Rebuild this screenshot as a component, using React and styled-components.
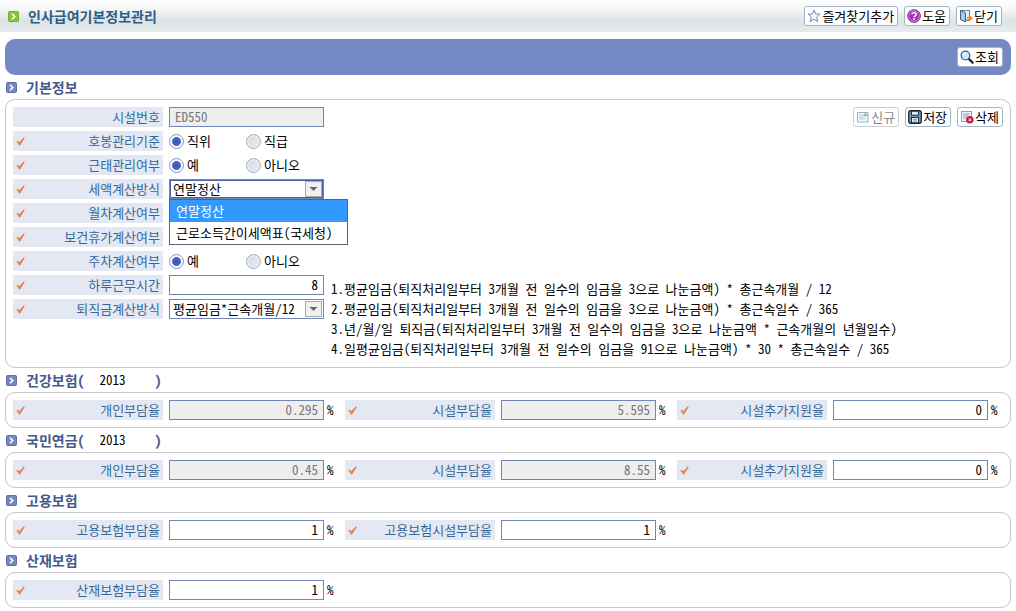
import React, { useState } from 'react';
import styled, { createGlobalStyle } from 'styled-components';

const GlobalStyle = createGlobalStyle`
  * {
    box-sizing: border-box;
  }
  body {
    margin: 0;
    background: #ffffff;
    color: #000000;
  }
  body, button, input, select {
    font-family: "Noto Sans Mono CJK KR", "Noto Sans CJK KR", "Liberation Sans", sans-serif;
    font-size: 13px;
    line-height: 20px;
  }
`;

const Header = styled.header`
  display: flex;
  align-items: center;
  justify-content: space-between;
  height: 32px;
  padding: 0 14px 0 8px;
  background: linear-gradient(#ffffff 0%, #f4f6f6 30%, #dde3e5 65%, #e6ebec 100%);
`;

const PageTitle = styled.h1`
  display: flex;
  align-items: center;
  gap: 9px;
  margin: 0;
  font-size: 14px;
  font-weight: 700;
  line-height: 20px;
  color: #2c5f88;
`;

const ButtonGroup = styled.div`
  display: flex;
  gap: 6px;
`;

const ToolButton = styled.button`
  display: flex;
  align-items: center;
  gap: 1px;
  height: 20px;
  padding: 0 3px 0 2px;
  border: 1px solid #a3b5c4;
  border-radius: 3px;
  background: #ffffff;
  color: #000000;
  line-height: 18px;
  white-space: nowrap;
  cursor: pointer;
  &:disabled {
    border-color: #c9ced3;
    color: #8c8c8c;
    cursor: default;
  }
  > svg {
    flex: none;
  }
`;

const SearchBar = styled.div`
  display: flex;
  align-items: center;
  justify-content: flex-end;
  height: 36px;
  margin: 7px 5px 0;
  padding: 0 8px;
  border-radius: 10px;
  background: #7489c6;
`;

const SectionTitle = styled.h2`
  display: flex;
  align-items: center;
  height: 24px;
  margin: 0;
  padding: 0 6px;
  font-size: 14px;
  font-weight: 700;
  color: #46598c;
  > svg {
    margin-right: 9px;
  }
`;

const YearInput = styled.input`
  width: 70px;
  height: 20px;
  padding: 0 0 0 15px;
  border: none;
  background: none;
  color: #000000;
`;

const Panel = styled.section`
  display: flex;
  margin: 0 5px;
  padding: ${(props) => (props.$tall ? '7px 7px 8px' : '7px')};
  border: 1px solid #c6c6c9;
  border-radius: 10px;
`;

const FieldList = styled.div`
  display: flex;
  flex-direction: column;
  gap: 4px;
`;

const RateList = styled.div`
  display: flex;
  gap: 12px;
`;

const Field = styled.div`
  display: flex;
  gap: 6px;
  height: 20px;
`;

const FieldLabel = styled.label`
  display: flex;
  align-items: center;
  justify-content: space-between;
  width: 150px;
  padding: 0 3px;
  background: #e4e8f3;
  color: #36699a;
  white-space: nowrap;
`;

const LabelText = styled.span`
  margin-left: auto;
`;

const TextInput = styled.input`
  width: 155px;
  height: 20px;
  padding: 0 5px 1px;
  border: 1px solid #7385b5;
  border-radius: 0;
  background: #ffffff;
  color: #000000;
  line-height: 17px;
  text-align: ${(props) => props.$align || 'right'};
  &:read-only {
    background: #eeeeee;
    color: #777777;
  }
`;

const RateValue = styled.div`
  display: flex;
  gap: 3px;
`;

const Unit = styled.span`
  width: 6px;
`;

const RadioGroup = styled.div`
  display: flex;
`;

const RadioLabel = styled.label`
  display: flex;
  align-items: center;
  gap: 3px;
  width: 77px;
  white-space: nowrap;
`;

const Radio = styled.input`
  appearance: none;
  flex: none;
  width: 15px;
  height: 15px;
  margin: 0;
  border: 1px solid #a9adb3;
  border-radius: 50%;
  background: linear-gradient(135deg, #d3dae2, #e9eff4);
  box-shadow: inset 0 0 0 1px #f4f6f8;
  &:checked {
    border-color: #8795b9;
    background: radial-gradient(circle, #3454b4 0, #4766c0 4px, #ffffff 5px);
  }
`;

const SelectBox = styled.div`
  position: relative;
  width: 155px;
  height: 20px;
`;

const Select = styled.select`
  appearance: none;
  width: 100%;
  height: 20px;
  padding: 0 20px 0 3px;
  border: 1px solid #7385b5;
  border-radius: 0;
  outline: ${(props) => (props.$open ? '1px solid #4b5fa5' : 'none')};
  outline-offset: -2px;
  background: #ffffff;
  color: #000000;
  line-height: 18px;
`;

const SelectArrow = styled.svg`
  position: absolute;
  top: 2px;
  right: 2px;
  pointer-events: none;
`;

const OptionList = styled.ul`
  position: absolute;
  z-index: 1;
  top: 20px;
  left: 0;
  width: 179px;
  margin: 0;
  padding: 0;
  border: 1px solid #5a6270;
  background: #ffffff;
  list-style: none;
`;

const Option = styled.li`
  height: 22px;
  padding: 0 6px;
  line-height: 22px;
  white-space: nowrap;
  background: ${(props) => (props.$selected ? '#3399ff' : '#ffffff')};
  color: ${(props) => (props.$selected ? '#ffffff' : '#000000')};
`;

const Aside = styled.div`
  display: flex;
  flex: 1;
  flex-direction: column;
  align-items: flex-end;
  gap: 152px;
`;

const Notes = styled.ol`
  align-self: stretch;
  margin: 0;
  padding: 0 0 0 7px;
  list-style: none;
  white-space: nowrap;
`;

const ArrowIcon = ({ color, dark }) => (
  <svg width="11" height="11" viewBox="0 0 11 11" aria-hidden="true">
    <rect x="0.5" y="0.5" width="10" height="10" rx="1" fill={color} stroke={dark} />
    <path d="M4 2.7L6.8 5.5L4 8.3" fill="none" stroke="#ffffff" strokeWidth="1.6" />
  </svg>
);

const CheckIcon = () => (
  <svg width="9" height="9" viewBox="0 0 9 9" aria-hidden="true">
    <path d="M0.2 4.6L2 3.7L3.2 5.2L7.8 0.2L8.8 1L3.7 8.9Z" fill="#e8834f" />
  </svg>
);

const StarIcon = () => (
  <svg width="14" height="14" viewBox="0 0 14 14" aria-hidden="true">
    <path
      d="M7 1L8.7 5H13L9.6 8L10.8 12.7L7 10.2L3.2 12.7L4.4 8L1 5H5.3Z"
      fill="#f6f8ff"
      stroke="#8388b8"
      strokeLinejoin="round"
    />
  </svg>
);

const HelpIcon = () => (
  <svg width="14" height="14" viewBox="0 0 14 14" aria-hidden="true">
    <circle cx="7" cy="7" r="6.3" fill="#a62bb8" stroke="#7b1b90" />
    <circle cx="7" cy="7" r="5.3" fill="none" stroke="#e3a8ec" strokeWidth="0.8" />
    <path d="M5 5.6C5 3 9.2 3 9.2 5.4C9.2 6.9 7.1 6.8 7.1 8.4" fill="none" stroke="#ffffff" strokeWidth="1.5" />
    <rect x="6.3" y="9.3" width="1.6" height="1.6" fill="#ffffff" />
  </svg>
);

const CloseIcon = () => (
  <svg width="14" height="14" viewBox="0 0 14 14" aria-hidden="true">
    <path d="M1.5 1.5H10.5V11.5H6" fill="#e4f0f8" stroke="#5f7c98" />
    <path d="M1.5 1.5L6.5 4V13L1.5 10.5Z" fill="#a7cbe4" stroke="#3f6080" />
    <path d="M8 8.2H10.5V6L13.8 9.3L10.5 12.6V10.4H8Z" fill="#f08a24" />
  </svg>
);

const SearchIcon = () => (
  <svg width="14" height="14" viewBox="0 0 14 14" aria-hidden="true">
    <path d="M8.8 8.8L12.6 12.6" stroke="#1b2c50" strokeWidth="2.4" strokeLinecap="round" />
    <circle cx="5.5" cy="5.5" r="4.3" fill="#cfe9f8" stroke="#39629a" strokeWidth="1.3" />
    <path d="M3.2 5.2C3.4 4 4.2 3.3 5.4 3.2" fill="none" stroke="#ffffff" strokeWidth="1.2" />
  </svg>
);

const NewIcon = () => (
  <svg width="14" height="14" viewBox="0 0 14 14" aria-hidden="true">
    <path d="M1.5 2.5H12V12H1.5Z" fill="#f3f8fa" stroke="#9db0bb" />
    <path d="M3 5H8M3 7H9M3 9H9" stroke="#b3c6d0" />
    <path d="M8.5 2.5L12 6H8.5Z" fill="#7f9dad" />
  </svg>
);

const SaveIcon = () => (
  <svg width="14" height="14" viewBox="0 0 14 14" aria-hidden="true">
    <path d="M0.7 2L2 0.7H12L13.3 2V12L12 13.3H2L0.7 12Z" fill="#6d9ab8" stroke="#14202c" strokeWidth="1.2" />
    <rect x="3.5" y="1.2" width="7" height="4" fill="#d9ecf6" stroke="#14202c" strokeWidth="0.9" />
    <rect x="3.5" y="7.5" width="7" height="5.3" fill="#f2f8fb" stroke="#14202c" strokeWidth="0.9" />
    <path d="M5 9.3H9M5 11H9" stroke="#5d87a5" strokeWidth="0.9" />
  </svg>
);

const DeleteIcon = () => (
  <svg width="14" height="14" viewBox="0 0 14 14" aria-hidden="true">
    <rect x="1.5" y="1.5" width="10" height="10" fill="#eef3fa" stroke="#8e9fc0" />
    <path d="M3 4H10M3 6H8M3 8H6" stroke="#8e9fc0" />
    <circle cx="9.8" cy="9.8" r="3.8" fill="#d3173e" />
    <path d="M8.5 8.5L11.1 11.1M11.1 8.5L8.5 11.1" stroke="#ffffff" />
  </svg>
);

const DropArrow = () => (
  <SelectArrow width="17" height="16" viewBox="0 0 17 16" aria-hidden="true">
    <rect x="0.5" y="0.5" width="16" height="15" fill="#f0f0ee" stroke="#a9a9a5" />
    <path d="M4.5 6H12.5L8.5 10Z" fill="#666666" />
  </SelectArrow>
);

const Label = ({ htmlFor, id, required = true, children }) => (
  <FieldLabel as={htmlFor ? 'label' : 'span'} htmlFor={htmlFor} id={id}>
    {required && <CheckIcon />}
    <LabelText>{children}</LabelText>
  </FieldLabel>
);

const RadioField = ({ name, label, options, covered }) => (
  <Field>
    <Label id={`${name}-label`}>{label}</Label>
    {!covered && (
      <RadioGroup role="radiogroup" aria-labelledby={`${name}-label`}>
        {options.map((option, i) => (
          <RadioLabel key={option}>
            <Radio type="radio" name={name} value={option} defaultChecked={i === 0} />
            {option}
          </RadioLabel>
        ))}
      </RadioGroup>
    )}
  </Field>
);

const RateField = ({ id, label, value, readOnly }) => (
  <Field>
    <Label htmlFor={id}>{label}</Label>
    <RateValue>
      <TextInput id={id} defaultValue={value} readOnly={readOnly} />
      <Unit>%</Unit>
    </RateValue>
  </Field>
);

const Heading = ({ year, yearLabel, children }) => (
  <SectionTitle>
    <ArrowIcon color="#7488c0" dark="#5d70ac" />
    {children}
    {year && (
      <>
        (
        <YearInput aria-label={yearLabel} defaultValue={year} />
        )
      </>
    )}
  </SectionTitle>
);

const yesNo = ['예', '아니오'];
const taxMethods = ['연말정산', '근로소득간이세액표(국세청)'];

const insurances = [
  {
    title: '건강보험',
    year: '2013',
    rates: [
      { id: 'health-personal', label: '개인부담율', value: '0.295', readOnly: true },
      { id: 'health-facility', label: '시설부담율', value: '5.595', readOnly: true },
      { id: 'health-extra', label: '시설추가지원율', value: '0' },
    ],
  },
  {
    title: '국민연금',
    year: '2013',
    rates: [
      { id: 'pension-personal', label: '개인부담율', value: '0.45', readOnly: true },
      { id: 'pension-facility', label: '시설부담율', value: '8.55', readOnly: true },
      { id: 'pension-extra', label: '시설추가지원율', value: '0' },
    ],
  },
  {
    title: '고용보험',
    rates: [
      { id: 'employment', label: '고용보험부담율', value: '1' },
      { id: 'employment-facility', label: '고용보험시설부담율', value: '1' },
    ],
  },
  {
    title: '산재보험',
    rates: [{ id: 'accident', label: '산재보험부담율', value: '1' }],
  },
];

const App = () => {
  const [taxMethod, setTaxMethod] = useState(taxMethods[0]);
  const [open, setOpen] = useState(true);

  const pickTaxMethod = (method) => {
    setTaxMethod(method);
    setOpen(false);
  };

  return (
    <>
      <GlobalStyle />
      <Header>
        <PageTitle>
          <ArrowIcon color="#8cc43c" dark="#74ad2c" />
          인사급여기본정보관리
        </PageTitle>
        <ButtonGroup>
          <ToolButton type="button"><StarIcon />즐겨찾기추가</ToolButton>
          <ToolButton type="button"><HelpIcon />도움</ToolButton>
          <ToolButton type="button"><CloseIcon />닫기</ToolButton>
        </ButtonGroup>
      </Header>
      <main>
        <SearchBar>
          <ToolButton type="button"><SearchIcon />조회</ToolButton>
        </SearchBar>

        <Heading>기본정보</Heading>
        <Panel $tall>
          <FieldList>
            <Field>
              <Label htmlFor="facility" required={false}>시설번호</Label>
              <TextInput id="facility" $align="left" defaultValue="ED550" readOnly />
            </Field>
            <RadioField name="grade" label="호봉관리기준" options={['직위', '직급']} />
            <RadioField name="attendance" label="근태관리여부" options={yesNo} />
            <Field>
              <Label htmlFor="tax">세액계산방식</Label>
              <SelectBox>
                <Select
                  id="tax"
                  $open={open}
                  value={taxMethod}
                  onChange={(e) => pickTaxMethod(e.target.value)}
                >
                  {taxMethods.map((method) => <option key={method}>{method}</option>)}
                </Select>
                <DropArrow />
                {open && (
                  <OptionList role="listbox" aria-label="세액계산방식">
                    {taxMethods.map((method) => (
                      <Option
                        key={method}
                        role="option"
                        aria-selected={method === taxMethod}
                        $selected={method === taxMethod}
                        onClick={() => pickTaxMethod(method)}
                      >
                        {method}
                      </Option>
                    ))}
                  </OptionList>
                )}
              </SelectBox>
            </Field>
            {/* the open list lies over these two rows */}
            <RadioField name="monthly" label="월차계산여부" options={yesNo} covered={open} />
            <RadioField name="health-leave" label="보건휴가계산여부" options={yesNo} covered={open} />
            <RadioField name="weekly" label="주차계산여부" options={yesNo} />
            <Field>
              <Label htmlFor="hours">하루근무시간</Label>
              <TextInput id="hours" defaultValue="8" />
            </Field>
            <Field>
              <Label htmlFor="severance">퇴직금계산방식</Label>
              <SelectBox>
                <Select id="severance">
                  <option>평균임금*근속개월/12</option>
                </Select>
                <DropArrow />
              </SelectBox>
            </Field>
          </FieldList>
          <Aside>
            <ButtonGroup>
              <ToolButton type="button" disabled><NewIcon />신규</ToolButton>
              <ToolButton type="button"><SaveIcon />저장</ToolButton>
              <ToolButton type="button"><DeleteIcon />삭제</ToolButton>
            </ButtonGroup>
            <Notes>
              <li>1.평균임금(퇴직처리일부터 3개월 전 일수의 임금을 3으로 나눈금액) * 총근속개월 / 12</li>
              <li>2.평균임금(퇴직처리일부터 3개월 전 일수의 임금을 3으로 나눈금액) * 총근속일수 / 365</li>
              <li>3.년/월/일 퇴직금(퇴직처리일부터 3개월 전 일수의 임금을 3으로 나눈금액 * 근속개월의 년월일수)</li>
              <li>4.일평균임금(퇴직처리일부터 3개월 전 일수의 임금을 91으로 나눈금액) * 30 * 총근속일수 / 365</li>
            </Notes>
          </Aside>
        </Panel>

        {insurances.map(({ title, year, rates }) => (
          <React.Fragment key={title}>
            <Heading year={year} yearLabel={`${title} 연도`}>{title}</Heading>
            <Panel>
              <RateList>
                {rates.map((rate) => <RateField key={rate.id} {...rate} />)}
              </RateList>
            </Panel>
          </React.Fragment>
        ))}
      </main>
    </>
  );
};

export default App;
